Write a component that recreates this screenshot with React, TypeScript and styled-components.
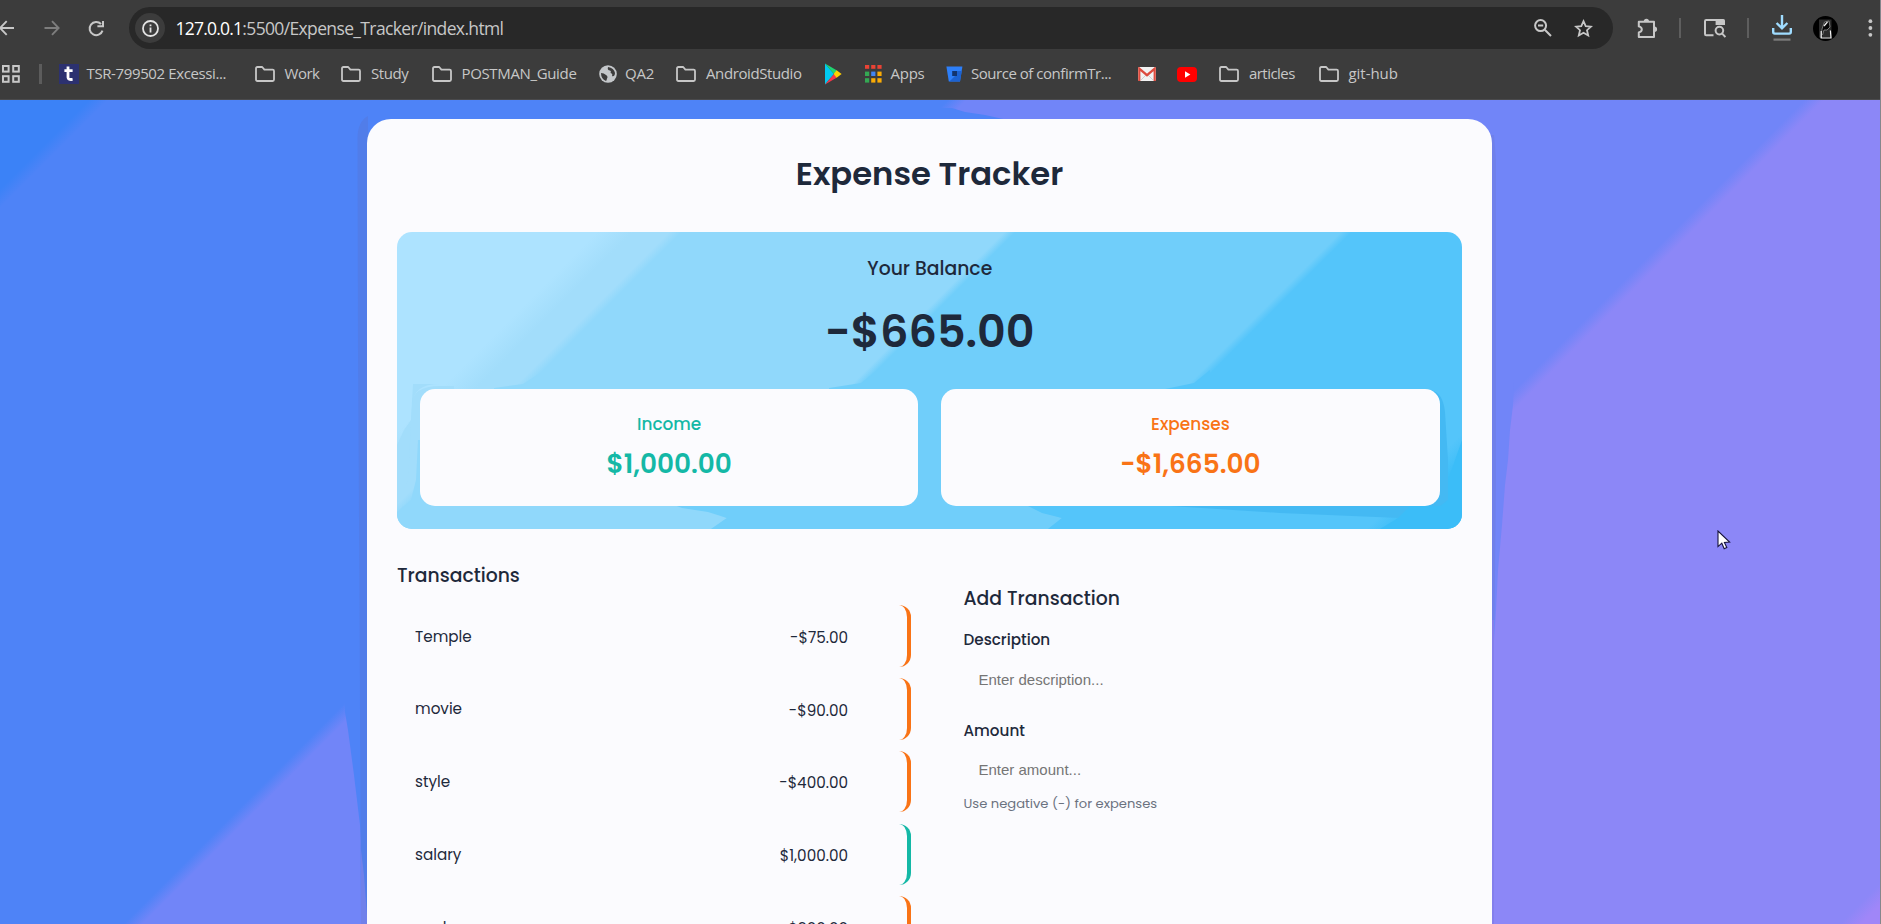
import React from "react";
import styled, { createGlobalStyle } from "styled-components";

const GlobalStyle = createGlobalStyle`
  *, *::before, *::after { box-sizing: border-box; }
  body { margin: 0; background: #3c3c3c; overflow: hidden; }
`;

const Frame = styled.div`
  display: flex;
  flex-direction: column;
  width: 1881px;
  height: 924px;
  overflow: hidden;
  border-right: 1px solid #85868c;
  font-family: "Poppins", "Inter", sans-serif;
  color: #1e293b;
`;

/* ---------- browser chrome ---------- */

const Chrome = styled.header`
  flex: none;
  height: 100px;
  background: #3c3c3c;
  border-bottom: 1px solid #4a4a4c;
  font-family: "Segoe UI", "Open Sans", sans-serif;
  color: #c7c7c7;
`;

const Toolbar = styled.div`
  display: flex;
  align-items: center;
  height: 56px;
  svg { display: block; }
`;

const ToolSlot = styled.span<{ $width: number; $before?: number }>`
  flex: none;
  width: ${(p) => p.$width}px;
  margin-left: ${(p) => p.$before ?? 0}px;
`;

const AddressBar = styled.div`
  display: flex;
  align-items: center;
  flex: none;
  width: 1484px;
  height: 42px;
  margin-left: 25.5px;
  padding-left: 6px;
  border-radius: 21px;
  background: #282828;
`;

const InfoBadge = styled.span`
  display: flex;
  align-items: center;
  justify-content: center;
  width: 30px;
  height: 30px;
  margin-right: 10.5px;
  border-radius: 50%;
  background: #3c3c3c;
`;

const Url = styled.span`
  flex: 1;
  font-size: 17.5px;
  line-height: 24px;
  letter-spacing: -0.64px;
  white-space: nowrap;
`;

const Host = styled.span`
  color: #fff;
  letter-spacing: -0.78px;
`;

const Divider = styled.span<{ $before: number }>`
  flex: none;
  width: 2px;
  height: 20px;
  margin-left: ${(p) => p.$before}px;
  background: #5e5e5e;
`;

const Avatar = styled.span`
  flex: none;
  width: 25px;
  height: 25px;
  margin-left: 21px;
  border-radius: 50%;
  background: #000;
  overflow: hidden;
`;

const BookmarkBar = styled.div`
  display: flex;
  align-items: center;
  height: 36px;
  padding-left: 2px;
  svg { display: block; flex: none; }
`;

const Bookmark = styled.span<{ $pitch: number; $iconWidth: number }>`
  display: grid;
  grid-template-columns: ${(p) => p.$iconWidth}px 1fr;
  align-items: center;
  flex: none;
  width: ${(p) => p.$pitch}px;
`;

const BookmarkLabel = styled.span<{ $track: number }>`
  padding-bottom: 1.5px;
  font-size: 15px;
  line-height: 20px;
  letter-spacing: ${(p) => p.$track}px;
  white-space: nowrap;
`;

const BookmarkDivider = styled.span`
  flex: none;
  width: 3px;
  height: 20px;
  margin: 0 17px 0 19px;
  background: #5c5c5c;
`;

/* ---------- page ---------- */

const Page = styled.main`
  position: relative;
  flex: 1;
  min-height: 0;
  padding: 19px 388px 0 367px;
  overflow: hidden;
  background: linear-gradient(
    135deg,
    #3b82f7 3.3%, #4e83f7 4%,
    #4e83f7 35.05%, #7185f8 35.75%,
    #7185f8 66.75%, #8c87f7 67.45%,
    #8c87f7 98.5%, #a086f8 99.3%
  );
`;

const Backdrop = styled.svg`
  position: absolute;
  inset: 0;
`;

const Card = styled.section`
  position: relative;
  height: 960px;
  padding: 35px 30px 0;
  border-radius: 24px;
  background: #fbfbfe;
`;

const Title = styled.h1`
  margin: 0 0 38px;
  font-size: 32.25px;
  font-weight: 600;
  line-height: 40px;
  text-align: center;
`;

const Balance = styled.section`
  position: relative;
  height: 296.6px;
  padding: 23px 22.5px 0 23px;
  border-radius: 15px;
  overflow: hidden;
  background: linear-gradient(
    135deg,
    #ade3ff 14.7%, #a2ddfb 17.3%,
    #a2ddfb 20%, #90d8fb 20.9%,
    #90d8fb 44.6%, #70cefa 45.4%,
    #70cefa 69.3%, #54c5fa 70.1%,
    #54c5fa 93%, #3bbdf8 95.3%
  );
`;

const BalanceLabel = styled.h2`
  position: relative;
  margin: 0 0 18.5px;
  font-size: 18.8px;
  font-weight: 500;
  line-height: 28px;
  text-align: center;
`;

const BalanceValue = styled.p`
  position: relative;
  margin: 0 0 27.3px;
  font-size: 44.5px;
  font-weight: 600;
  line-height: 60px;
  text-align: center;
`;

const Stats = styled.div`
  position: relative;
  display: grid;
  grid-template-columns: 1fr 1fr;
  gap: 23px;
`;

const Stat = styled.div<{ $color: string }>`
  height: 117px;
  padding-top: 23.5px;
  border-radius: 15px;
  background: #fbfbfe;
  color: ${(p) => p.$color};
  text-align: center;
`;

const StatLabel = styled.h3`
  margin: 0 0 10.5px;
  font-size: 16.9px;
  font-weight: 500;
  line-height: 24px;
`;

const StatValue = styled.p`
  margin: 0;
  font-size: 26.35px;
  font-weight: 600;
  line-height: 34px;
`;

const Columns = styled.div`
  display: grid;
  grid-template-columns: 514px 1fr;
  column-gap: 52.5px;
  padding-top: 33.4px;
`;

const SectionTitle = styled.h2`
  margin: 0 0 15.2px;
  font-size: 18.8px;
  font-weight: 500;
  line-height: 28px;
`;

const TransactionList = styled.ul`
  display: flex;
  flex-direction: column;
  gap: 11.1px;
  margin: 0;
  padding: 0;
  list-style: none;
`;

const Transaction = styled.li<{ $income: boolean }>`
  display: flex;
  align-items: center;
  justify-content: space-between;
  height: 61.7px;
  padding: 0 59px 0 18px;
  border-right: 4px solid ${(p) => (p.$income ? "#14b8a6" : "#f97316")};
  border-radius: 12px;
`;

const Cell = styled.span<{ $top: number }>`
  padding-top: ${(p) => p.$top}px;
  font-size: 15.2px;
  line-height: 20px;
`;

const Form = styled.form`
  display: flex;
  flex-direction: column;
  padding-top: 23px;
`;

const Label = styled.label<{ $before: number }>`
  margin: ${(p) => p.$before}px 0 6px;
  font-size: 15.2px;
  font-weight: 500;
  line-height: 20px;
`;

const Input = styled.input`
  height: 46px;
  margin: 0;
  padding: 0 15px;
  border: none;
  outline: none;
  background: transparent;
  font: 15px "Liberation Sans", Arial, sans-serif;
  &::placeholder { color: #757575; opacity: 1; }
`;

const Hint = styled.small`
  padding-top: 1.4px;
  font-size: 13.1px;
  line-height: 20px;
  color: #6b7280;
`;

const Cursor = styled.svg`
  position: absolute;
  left: 1717px;
  top: 430px;
`;

/* ---------- icons ---------- */

const FolderIcon = () => (
  <svg width="20" height="18" viewBox="0 0 20 18" fill="none" stroke="#c7c7c7" strokeWidth="1.8" strokeLinejoin="round">
    <path d="M1 3.4 Q1 2 2.4 2 H7.2 L9.4 4.6 H17.6 Q19 4.6 19 6 V14.6 Q19 16 17.6 16 H2.4 Q1 16 1 14.6 Z" />
  </svg>
);

const ArrowIcon = ({ forward = false }: { forward?: boolean }) => (
  <svg width="16" height="16" viewBox="0 0 16 16" fill="none" stroke={forward ? "#7d7d7d" : "#c7c7c7"} strokeWidth="1.9">
    {forward ? <path d="M0.5 8 H14 M8 1.2 L14.6 8 L8 14.8" /> : <path d="M14 8 H0.5 M6.7 1.2 L0 8 L6.7 14.8" />}
  </svg>
);

const ReloadIcon = () => (
  <svg width="17" height="17" viewBox="0 0 17 17" fill="none" stroke="#c7c7c7" strokeWidth="2">
    <path d="M14.5 10.6 A6.6 6.6 0 1 1 13 4" />
    <path d="M15 1 V6.2 H9.4" />
  </svg>
);

const TsrIcon = () => (
  <svg width="20" height="20" viewBox="0 0 20 20">
    <rect width="20" height="20" fill="#2c3170" />
    <path d="M9 2.5 V13.5 Q9 16 13.6 15.4 M5.4 6.6 H13.6" fill="none" stroke="#fff" strokeWidth="2.8" />
  </svg>
);

const GlobeIcon = () => (
  <svg width="18" height="18" viewBox="0 0 18 18">
    <circle cx="9" cy="9" r="8.8" fill="#c4c7ca" />
    <path d="M2 8 Q5 8 7 10 Q9.4 11.6 8 13.4 Q7.6 15.6 7 16 Q2 14 2 8Z M9 2 Q8 5.2 11 5.6 Q12.4 6 11.6 8 Q14 8.6 13 11 Q15.6 12 16 8 Q15 3 9 2Z" fill="#3c3c3c" />
  </svg>
);

const PlayIcon = () => (
  <svg width="18" height="22" viewBox="0 0 18 22">
    <path d="M1 0.5 L10 11 L1 21.5 Z" fill="#00c9f2" />
    <path d="M1 0.5 L13 7.5 L10 11 Z" fill="#1fd672" />
    <path d="M1 21.5 L13 14.5 L10 11 Z" fill="#f4364b" />
    <path d="M12.6 7.2 L17.6 11 L12.6 14.8 L9.6 11 Z" fill="#ffd000" />
  </svg>
);

const appDots = ["#ea4335", "#ea4335", "#ea4335", "#34a853", "#4285f4", "#fbab05", "#34a853", "#fbab05", "#fbab05"];
const AppsIcon = () => (
  <svg width="17" height="18" viewBox="0 0 17 18">
    {appDots.map((c, i) => (
      <rect key={i} x={(i % 3) * 6.2} y={Math.floor(i / 3) * 6.6} width="4.2" height={i < 3 ? 3.8 : 4.4} fill={c} />
    ))}
  </svg>
);

const BucketIcon = () => (
  <svg width="17" height="16" viewBox="0 0 17 16">
    <path d="M0.4 0.5 H16.4 L14 15.5 H2.8 Z" fill="#2d7ff9" />
    <path d="M15.8 5 L14 15.5 H3.4 L9 10 L11 5 Z" fill="#1c62d1" />
    <rect x="6.2" y="5" width="4.8" height="5" fill="#12346e" />
  </svg>
);

const GmailIcon = () => (
  <svg width="18" height="14" viewBox="0 0 18 14">
    <rect width="18" height="14" rx="1.4" fill="#f2f2f2" />
    <path d="M3 13 L9 7 L15 13" fill="none" stroke="#cfcfcf" />
    <path d="M1.3 14 V1.6 L9 8.2 L16.7 1.6 V14" fill="none" stroke="#dd4b3e" strokeWidth="2.2" />
  </svg>
);

const YoutubeIcon = () => (
  <svg width="20" height="15" viewBox="0 0 20 15">
    <rect width="20" height="15" rx="4" fill="#f00" />
    <path d="M8 4.2 L13.4 7.5 L8 10.8 Z" fill="#fff" />
  </svg>
);

const GridIcon = () => (
  <svg width="18" height="18" viewBox="0 0 18 18" fill="none" stroke="#c7c7c7" strokeWidth="2">
    <rect x="1" y="1" width="5.6" height="5.6" />
    <rect x="11.2" y="1" width="5.6" height="5.6" />
    <rect x="1" y="11.2" width="5.6" height="5.6" />
    <rect x="11.2" y="11.2" width="5.6" height="5.6" />
  </svg>
);

const InfoIcon = () => (
  <svg width="17" height="17" viewBox="0 0 17 17">
    <circle cx="8.5" cy="8.5" r="7.5" fill="none" stroke="#e3e3e3" strokeWidth="1.8" />
    <path d="M8.5 7.6 V12.4 M8.5 4.4 V6.2" stroke="#e3e3e3" strokeWidth="1.8" />
  </svg>
);

const ZoomOutIcon = () => (
  <svg width="18" height="18" viewBox="0 0 18 18" fill="none" stroke="#c7c7c7" strokeWidth="2">
    <circle cx="6.6" cy="6.6" r="5.5" />
    <path d="M10.8 10.8 L17 17 M4 6.6 H9.2" />
  </svg>
);

const StarIcon = () => (
  <svg width="19" height="19" viewBox="0 0 19 19" fill="none" stroke="#c7c7c7" strokeWidth="1.8">
    <path d="M9.5 2.2 L11.7 7.1 L17 7.6 L13 11.2 L14.2 16.5 L9.5 13.7 L4.8 16.5 L6 11.2 L2 7.6 L7.3 7.1 Z" />
  </svg>
);

const PuzzleIcon = () => (
  <svg width="21" height="21" viewBox="0 0 21 21">
    <path
      d="M1.8 3.8 H17 V19 H1.8 V14.4 Q4.8 13.6 4.8 11.4 Q4.8 9.2 1.8 8.4 Z"
      fill="none" stroke="#c7c7c7" strokeWidth="2" strokeLinejoin="round"
    />
    <path d="M6.8 3.4 A2.6 2.6 0 0 1 12 3.4 Z M17.4 8.6 A2.7 2.7 0 0 1 17.4 14 Z" fill="#c7c7c7" />
  </svg>
);

const TabSearchIcon = () => (
  <svg width="22" height="20" viewBox="0 0 22 20" fill="none" stroke="#c7c7c7" strokeWidth="2">
    <path d="M9.5 17.2 H2.2 Q1 17.2 1 16 V3.2 Q1 2 2.2 2 H12" />
    <path d="M11.6 1 H19.4 Q21 1 21 2.6 V7 H11.6 Z" fill="#c7c7c7" stroke="none" />
    <circle cx="15.4" cy="12.6" r="3.8" />
    <path d="M18 15.4 L21.4 19" />
  </svg>
);

const DownloadIcon = () => (
  <svg width="20" height="28" viewBox="0 0 20 28" fill="none" stroke="#9fdcff" strokeWidth="2.4">
    <path d="M10 1 V14 M4.6 9 L10 14.4 L15.4 9" />
    <path d="M1.2 14 V18 Q1.2 19.6 2.8 19.6 H17.2 Q18.8 19.6 18.8 18 V14" />
    <path d="M1.5 25.6 H18.5" stroke="#7b7b7b" strokeWidth="2.2" />
  </svg>
);

const MoreIcon = () => (
  <svg width="5" height="18" viewBox="0 0 5 18" fill="#c7c7c7">
    <circle cx="2.4" cy="2.2" r="1.9" />
    <circle cx="2.4" cy="9" r="1.9" />
    <circle cx="2.4" cy="15.8" r="1.9" />
  </svg>
);

const AvatarDrawing = () => (
  <svg width="25" height="25" viewBox="0 0 25 25" fill="none">
    <path d="M6 3.5 H18.5 V21.5 H6 Z" fill="#2c2c2c" />
    <path d="M8 22 L9 13 L11.5 6 L16 5 L17 11 L14 14 H11 L9.5 19" fill="#050505" stroke="#8f8f8f" strokeWidth="0.8" />
    <path d="M8.2 15 V22 H18 L17.4 14.5 M11 10 L14.5 6" stroke="#f2f2f2" strokeWidth="1.2" />
  </svg>
);

/* Colour facets and shade that follow the card's edges; y runs from the top of the window */
const PageFacets = () => (
  <Backdrop width="1881" height="824" viewBox="0 100 1881 824">
    <path d="M925 108 H952 L965 112 L985 115 L1003 119 V121 H925 Z" fill="#4e83f7" />
    <path d="M345 690 H368 V924 H367 L366 905 L363 870 L360 825 L354 775 L348 730 L345 712 Z" fill="#4e83f7" />
    <path d="M368 116 Q357 122 357.5 140 L358 350 L359.5 600 L361 924 H368 Z" fill="#517de9" />
    <path d="M361 850 L364 875 L367 915 V924 H361 Z" fill="#7081ea" />
    <path d="M1490 380 H1514 L1513 405 L1510 430 L1508 460 L1505 485 L1502 525 L1498 570 L1496 610 L1494 640 L1492 660 H1490 Z" fill="#7185f8" />
    <path d="M1490 135 H1494 L1496 160 V480 L1494.5 620 H1490 Z" fill="#6f80ea" />
    <path d="M1490 620 H1494 V924 H1490 Z" fill="#837fec" />
  </Backdrop>
);

/* Tonal facets round the two stat boxes */
const BalanceFacets = () => (
  <Backdrop width="1065" height="297" viewBox="397 232 1065 297">
    <path d="M454 384 H440 Q412 384 413 405 L412 440 L408 480 L397 505 V445 L404 430 L411 420 L413 384 Z" fill="#a2ddfb" />
    <path d="M412 405 Q412 386 440 386 H454 V400 H424 V480 H408 Z" fill="#a2ddfb" />
    <path d="M418 440 L416 480 L411 500 L397 512 V529 H440 V440 Z" fill="#90d8fb" />
    <path d="M523 384 L494 388 V392 H540 V373 Z" fill="#90d8fb" />
    <path d="M861 383 L829 388 V392 H880 V368 Z" fill="#70cefa" />
    <path d="M1194 383 L1165 389 V392 H1210 V370 Z" fill="#54c5fa" />
    <path d="M420 500 H661 L682 508 L708 512 L727 518 L711 529 H420 Z" fill="#90d8fb" />
    <path d="M700 500 H1010 L1028 506 L1042 513 L1062 518 L1048 529 H711 L727 518 L708 512 L682 508 L661 500 Z" fill="#70cefa" />
    <path d="M1060 506 L1028 506 L1042 513 L1062 518 L1048 529 H1110 V506 Z" fill="#54c5fa" />
    <path d="M1155 505 H1440 V512 L1400 518 L1280 513 Z" fill="#44b9f3" />
    <path d="M1430 390 Q1443 392 1445 412 L1448 460 V500 L1440 506 H1430 Z" fill="#44b9f3" />
    <path d="M1462 440 L1448 480 V506 H1410 L1398 518 L1380 529 H1462 Z" fill="#3bbdf8" />
  </Backdrop>
);

/* ---------- data ---------- */

type Mark = { icon: React.ReactNode; label?: string; pitch: number; iconWidth: number; track?: number };

const bookmarks: Mark[] = [
  { icon: <TsrIcon />, label: "TSR-799502 Excessi...", pitch: 195.5, iconWidth: 27.5, track: -0.38 },
  { icon: <FolderIcon />, label: "Work", pitch: 86.5, iconWidth: 30, track: -0.47 },
  { icon: <FolderIcon />, label: "Study", pitch: 90.5, iconWidth: 30, track: -0.4 },
  { icon: <FolderIcon />, label: "POSTMAN_Guide", pitch: 167.5, iconWidth: 30, track: -0.35 },
  { icon: <GlobeIcon />, label: "QA2", pitch: 77, iconWidth: 26, track: -0.23 },
  { icon: <FolderIcon />, label: "AndroidStudio", pitch: 148, iconWidth: 30, track: -0.4 },
  { icon: <PlayIcon />, pitch: 41, iconWidth: 18 },
  { icon: <AppsIcon />, label: "Apps", pitch: 80.5, iconWidth: 25.5, track: -0.25 },
  { icon: <BucketIcon />, label: "Source of confirmTr...", pitch: 192, iconWidth: 25.5, track: -0.47 },
  { icon: <GmailIcon />, pitch: 39, iconWidth: 18 },
  { icon: <YoutubeIcon />, pitch: 42.5, iconWidth: 20 },
  { icon: <FolderIcon />, label: "articles", pitch: 99.5, iconWidth: 30, track: -0.55 },
  { icon: <FolderIcon />, label: "git-hub", pitch: 90, iconWidth: 30, track: -0.05 },
];

const transactions = [
  { name: "Temple", amount: "-$75.00" },
  { name: "movie", amount: "-$90.00" },
  { name: "style", amount: "-$400.00" },
  { name: "salary", amount: "$1,000.00" },
  { name: "work", amount: "-$300.00" },
];

export default function App() {
  return (
    <Frame>
      <GlobalStyle />
      <Chrome>
        <Toolbar>
          <ToolSlot $width={16}><ArrowIcon /></ToolSlot>
          <ToolSlot $width={16} $before={27.5}><ArrowIcon forward /></ToolSlot>
          <ToolSlot $width={16} $before={28}><ReloadIcon /></ToolSlot>
          <AddressBar>
            <InfoBadge><InfoIcon /></InfoBadge>
            <Url><Host>127.0.0.1</Host>:5500/Expense_Tracker/index.html</Url>
            <ToolSlot $width={18}><ZoomOutIcon /></ToolSlot>
            <ToolSlot $width={39} $before={22}><StarIcon /></ToolSlot>
          </AddressBar>
          <ToolSlot $width={21} $before={23.5}><PuzzleIcon /></ToolSlot>
          <Divider $before={21.5} />
          <ToolSlot $width={22} $before={22.5}><TabSearchIcon /></ToolSlot>
          <Divider $before={21} />
          <ToolSlot $width={20} $before={23.5}><DownloadIcon /></ToolSlot>
          <Avatar><AvatarDrawing /></Avatar>
          <ToolSlot $width={5} $before={30}><MoreIcon /></ToolSlot>
        </Toolbar>
        <BookmarkBar>
          <GridIcon />
          <BookmarkDivider />
          {bookmarks.map((b, i) => (
            <Bookmark key={i} $pitch={b.pitch} $iconWidth={b.iconWidth}>
              {b.icon}
              {b.label && <BookmarkLabel $track={b.track ?? 0}>{b.label}</BookmarkLabel>}
            </Bookmark>
          ))}
        </BookmarkBar>
      </Chrome>

      <Page>
        <PageFacets />
        <Card>
          <Title>Expense Tracker</Title>
          <Balance>
            <BalanceFacets />
            <BalanceLabel>Your Balance</BalanceLabel>
            <BalanceValue>-$665.00</BalanceValue>
            <Stats>
              <Stat $color="#14b8a6">
                <StatLabel>Income</StatLabel>
                <StatValue>$1,000.00</StatValue>
              </Stat>
              <Stat $color="#f97316">
                <StatLabel>Expenses</StatLabel>
                <StatValue>-$1,665.00</StatValue>
              </Stat>
            </Stats>
          </Balance>
          <Columns>
            <section>
              <SectionTitle>Transactions</SectionTitle>
              <TransactionList>
                {transactions.map((t) => (
                  <Transaction key={t.name} $income={!t.amount.startsWith("-")}>
                    <Cell $top={1.2}>{t.name}</Cell>
                    <Cell $top={3.8}>{t.amount}</Cell>
                  </Transaction>
                ))}
              </TransactionList>
            </section>
            <Form>
              <SectionTitle>Add Transaction</SectionTitle>
              <Label $before={2.3} htmlFor="description">Description</Label>
              <Input id="description" placeholder="Enter description..." />
              <Label $before={18.2} htmlFor="amount">Amount</Label>
              <Input id="amount" placeholder="Enter amount..." />
              <Hint>Use negative (-) for expenses</Hint>
            </Form>
          </Columns>
        </Card>
        <Cursor width="14" height="20" viewBox="0 0 14 20">
          <path d="M1 1 V16.6 L4.8 13.2 L7.2 18.8 L9.8 17.6 L7.4 12.4 L12.6 12 Z" fill="#fff" stroke="#15123a" strokeWidth="1.1" />
        </Cursor>
      </Page>
    </Frame>
  );
}
